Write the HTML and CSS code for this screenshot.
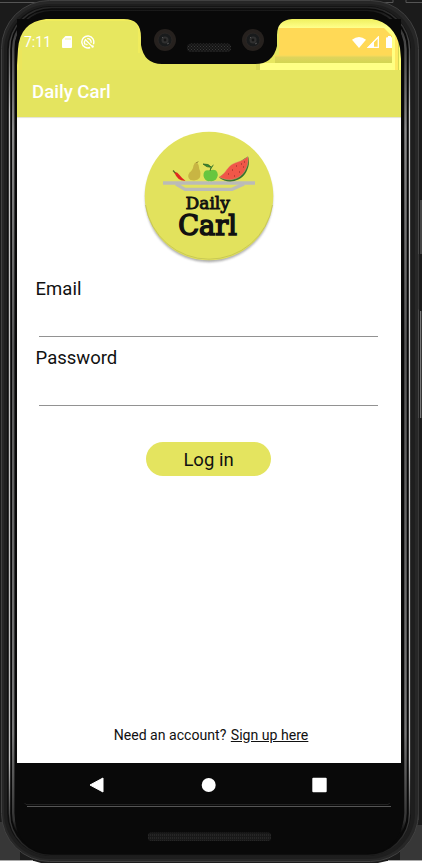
FILE: index.html
```html
<!DOCTYPE html>
<html lang="en">
<head>
<meta charset="utf-8">
<title>Daily Carl</title>
<link rel="stylesheet" href="styles.css">
</head>
<body>
<div class="device">
  <svg class="shell" viewBox="0 0 422 863" aria-hidden="true">
    <defs>
      <linearGradient id="rail" x1="0" y1="0" x2="0" y2="863" gradientUnits="userSpaceOnUse">
        <stop offset="0" stop-color="#202020"/><stop offset=".04" stop-color="#3c3c3c"/>
        <stop offset=".13" stop-color="#c4c4c4"/><stop offset=".88" stop-color="#c0c0c0"/>
        <stop offset=".95" stop-color="#3a3a3a"/><stop offset=".99" stop-color="#1c1c1c"/>
      </linearGradient>
      <linearGradient id="rail2" x1="0" y1="0" x2="0" y2="863" gradientUnits="userSpaceOnUse">
        <stop offset="0" stop-color="#0a0a0a"/><stop offset=".045" stop-color="#444"/>
        <stop offset=".15" stop-color="#8a8a8a"/><stop offset=".4" stop-color="#555"/><stop offset=".85" stop-color="#777"/>
        <stop offset=".95" stop-color="#333"/><stop offset=".965" stop-color="#0a0a0a"/>
      </linearGradient>
      <pattern id="mesh" width="3" height="3" patternUnits="userSpaceOnUse">
        <rect width="3" height="3" fill="#141414"/><path d="M0 0h1v1H0zM1.5 1.5h1v1h-1z" fill="#393939"/>
      </pattern>
      <pattern id="meshLow" width="2" height="3" patternUnits="userSpaceOnUse">
        <rect width="2" height="3" fill="#191919"/><path d="M0 0h1v2H0z" fill="#262626"/>
      </pattern>
    </defs>
    <rect width="422" height="863" fill="#1b1b1b"/>
    <path d="M0 2.5H44M380 2.5H393V0M406 0V2.5H422" stroke="#555" fill="none"/>
    <path d="M0 822H20V861H0zM400 825H422V861H400z" fill="#373737"/>
    <path d="M0 860.5H33M388 860.5H422" stroke="#aaa"/>
    <path d="M0 861H34L41 863H0zM422 861H387L378 863H422z" fill="#fff"/>
    <rect x="1.5" y=".5" width="417" height="861" rx="48" fill="#272727" stroke="#414141"/>
    <rect x="4" y="4" width="411" height="855" rx="46" fill="#1e1e1e"/>
    <rect x="7" y="6" width="404" height="850" rx="44" fill="#101010"/>
    <rect x="9.5" y="7.5" width="400" height="848" rx="42" fill="#090909" stroke="url(#rail)" stroke-width="1.4"/>
    <rect x="13.2" y="11" width="392.3" height="840" rx="38" fill="#090909" stroke="url(#rail2)" stroke-width="2.4"/>
    <rect x="15" y="11" width="388" height="843" rx="36" fill="#090909"/>
    <path d="M418.5 200V254M418.5 310V418" stroke="#484848"/>
    <path d="M420 200h2v54h-2z" fill="#444"/><path d="M420 311h1.3v107h-1.3z" fill="#777"/>
    <path d="M418.5 254V309M418.5 418V820" stroke="#383838"/>
    <path d="M18 796L26 804.5H388L397 797" fill="none" stroke="#222"/>
    <path d="M27 806.5H391" stroke="#555"/>
    <rect x="148" y="832.5" width="123" height="8.5" rx="3" fill="url(#meshLow)"/>
  </svg>

  <main class="screen">
    <header class="status">
      <svg class="glow" viewBox="0 0 384 51" aria-hidden="true">
        <defs>
          <linearGradient id="shade" x1="0" y1="0" x2="0" y2="1">
            <stop offset="0" stop-color="#ffdc5a"/><stop offset=".3" stop-color="#dfd45b"/><stop offset="1" stop-color="#d3d552"/>
          </linearGradient>
          <linearGradient id="topGlow" x1="0" y1="0" x2="0" y2="1">
            <stop offset="0" stop-color="#f0f05e"/><stop offset="1" stop-color="#ffff8c"/>
          </linearGradient>
        </defs>
        <rect width="384" height="51" fill="#e7e75f"/>
        <path d="M1 51V28Q3 1 29 1H112Q122 2 122 12V34" fill="none" stroke="#f4ee5c" stroke-width="1.4"/>
        <path d="M4 51V30" stroke="#efe55b"/>
        <path d="M239 44h4v7h-4z" fill="#dcdc5a"/>
        <rect x="243" y="44" width="141" height="7" fill="#ffff86"/>
        <rect x="258" y="0" width="126" height="9" fill="url(#topGlow)"/>
        <path d="M366 9H384V44H366z" fill="#ffff82"/>
        <path d="M262 9H367L375 17V37H262z" fill="#ffd956"/>
        <rect x="258" y="36" width="117" height="8" fill="url(#shade)"/>
        <path d="M375 19H378V51H375z" fill="#ffff82"/>
        <path d="M378 17H381V51H378z" fill="#ffe963"/>
        <path d="M381 20H382V51H381z" fill="#d5d553"/>
        <path d="M382 12H384V51H382z" fill="#ffff72"/>
      </svg>
      <div class="status-left">
        <span class="clock">7:11</span>
        <svg class="sd" viewBox="0 0 10 12"><path d="M3.5 0H9q1 0 1 1v10q0 1-1 1H1q-1 0-1-1V3.5z" fill="#fff"/><path d="M4 2v2M6 2v2M8 2v2" stroke="#e7e75f" stroke-width=".6"/></svg>
        <svg class="sync" viewBox="0 0 14 14" fill="none" stroke="#fff"><path d="M12.4 9.2A6 6 0 1 0 9.2 12.5" stroke-width="1.4"/><path d="M4.5 9.7A3.4 3.4 0 0 1 4 5.3M6.2 3.7A3.4 3.4 0 0 1 10.1 7.8M4 4.3L10.8 11.1M6.4 9.9L5.3 9.1" stroke-width="1.3"/><circle cx="11.6" cy="11.5" r="1.2" fill="#fff" stroke="none"/></svg>
      </div>
      <div class="status-right">
        <svg class="wifi" viewBox="0 0 14 11"><path d="M0 2.7Q7-2.7 14 2.7L7 11z" fill="#fff"/></svg>
        <svg class="signal" viewBox="0 0 12 12"><path d="M11.3 1V11.3H1.4z" fill="none" stroke="#fff" stroke-width="1.3"/><path d="M0 12L7 5V12z" fill="#fff"/></svg>
        <svg class="battery" viewBox="0 0 6 12"><path d="M0 2.2Q0 1.2 1 1.2H2V0H5V1.2H6V12H0z" fill="#fff"/></svg>
      </div>
    </header>

    <div class="appbar">Daily Carl</div>

    <section class="content">
      <svg class="logo" viewBox="0 0 138 140" role="img" aria-label="Daily Carl">
        <defs><filter id="soft" x="-10%" y="-10%" width="120%" height="120%"><feGaussianBlur stdDeviation="1.3"/></filter></defs>
        <circle cx="69" cy="71.5" r="63.7" fill="#777" opacity=".6" filter="url(#soft)"/>
        <circle cx="69" cy="69" r="64.3" fill="#e2e25d"/>
        <path d="M5.5 78A64.3 64.3 0 0 0 132.5 78" fill="none" stroke="#bdbd50" stroke-width=".7"/>
        <path d="M23 56H115" fill="none" stroke="#bbbbb8" stroke-width="3.4"/>
        <path d="M36 57L45 62.3H92L104 57" fill="none" stroke="#bbbbb8" stroke-width="3.2"/>
        <path d="M34.5 45Q37 44.500 39.500 48Q42 51.500 45.500 53.700Q38 54.500 34.500 46z" fill="#df281f"/><path d="M33 43.500L35.300 46" stroke="#536b28" stroke-width="1.200"/>
        <path d="M57 35.500Q59.500 38 59.300 42Q61.500 46 59.600 51Q57 54.500 50.500 53Q46.500 50 49.500 45.500Q53 43 53.500 38.500Q55 34.500 57 35.500z" fill="#c8b543"/><path d="M56.500 36L58 34.500" stroke="#766424"/>
        <path d="M70 43.500Q73 42 76 43.500Q79.500 47 76 52.500Q73 54.800 70 54Q65 55 63.500 49Q63 42 70 43.500z" fill="#67c63f"/>
        <path d="M70 44Q70 40 73.500 38M71 40Q67 41 63 37Q69 36.500 71 40" fill="#338f2d" stroke="#37662a" stroke-width=".8"/>
        <path d="M79 50.500C87 57 99 55 105 47C109 41 110 34 108 29.500C100 34 90 42 79 50.500z" fill="#35702e"/>
        <path d="M79 50C88 55 98 53 103.500 46C107.500 40.500 109 34 107.800 29.500C102 35 97 34 91 38C86 42 85 47 79 50z" fill="#f05748" stroke="#cfbf7c" stroke-width=".4"/>
        <path d="M88 47h1M92 43h1M96 39h1M101 37h1M94 49h1M99 45h1M103 40h1M104 35h1" stroke="#8a2925"/>
        <text class="logo-small" x="45.500" y="82.300" textLength="44.500" lengthAdjust="spacingAndGlyphs">Daily</text>
        <text class="logo-big" x="38.200" y="108.300" textLength="58.800" lengthAdjust="spacingAndGlyphs">Carl</text>
      </svg>
      <form class="form">
        <label for="email">Email</label>
        <input id="email" type="email">
        <label for="password">Password</label>
        <input id="password" type="password">
        <button type="button">Log in</button>
      </form>
      <p class="signup">Need an account? <a href="#">Sign up here</a></p>
    </section>

    <nav class="nav">
      <svg viewBox="0 0 16 16"><path d="M14 1V15L1 8z" fill="#fff" stroke="#fff" stroke-linejoin="round"/></svg>
      <svg viewBox="0 0 16 16"><circle cx="7.7" cy="8" r="7" fill="#fff"/></svg>
      <svg viewBox="0 0 16 16"><rect x=".3" y=".8" width="14.400" height="14.400" rx="1" fill="#fff"/></svg>
    </nav>
  </main>

  <svg class="notch" viewBox="0 0 384 50" aria-hidden="true">
    <path d="M0 0H29Q3 3 1 30L0 46z" fill="#090909"/>
    <path d="M384 0H355Q378 4 383 29L384 40z" fill="#090909"/>
    <path d="M107 0Q124 0 124 18V26Q127 45 145 45H238Q256 45 260 27V16Q260 1 275 0z" fill="#090909"/>
    <g transform="translate(148 21)"><circle r="11" fill="#26211e"/><circle r="7" fill="#191b1c" stroke="#2b2725"/><circle r="3.5" fill="#303030"/><circle r="1.4" fill="#151515"/><path d="M-3-3l1 1M2 4l2-1" stroke="#606060" stroke-width=".8"/></g>
    <g transform="translate(236 21)"><circle r="11" fill="#26211e"/><circle r="7" fill="#191b1c" stroke="#2b2725"/><circle r="3.5" fill="#303030"/><circle r="1.4" fill="#151515"/><path d="M-3-3l1 1M2 4l2-1" stroke="#606060" stroke-width=".8"/></g>
    <rect x="170" y="24.5" width="44" height="8.5" rx="4" fill="url(#mesh)"/>
  </svg>
</div>
</body>
</html>
```
FILE: styles.css
```css
* { box-sizing: border-box; }
body { margin: 0; font-family: Roboto, "Liberation Sans", sans-serif; color: #111; }
svg { display: block; flex: none; }
.device { position: relative; width: 422px; height: 863px; padding: 19px 21px 60px 17px; overflow: hidden; }
.shell { position: absolute; inset: 0; width: 422px; height: 863px; }
.screen { position: relative; display: flex; flex-direction: column; width: 384px; height: 784px; }
.notch { position: absolute; left: 17px; top: 19px; width: 384px; height: 50px; }

.status { position: relative; height: 51px; display: flex; justify-content: space-between; align-items: flex-start; padding: 14px 9px 0 7px; color: #fff; }
.glow { position: absolute; inset: 0; width: 384px; height: 51px; }
.status-left, .status-right { position: relative; display: flex; align-items: center; height: 18px; }
.clock { font-size: 14px; line-height: 18px; width: 38px; }
.sd { width: 10px; height: 12px; }
.sync { width: 14px; height: 14px; margin-left: 9px; }
.wifi { width: 14px; height: 11px; }
.signal { width: 12px; height: 12px; margin-left: 1px; }
.battery { width: 6px; height: 12px; margin-left: 7px; }

.appbar { height: 47px; padding-left: 15px; background: #e4e45f; color: #fff; font-size: 18.6px; font-weight: 500; line-height: 44px; }

.content { flex: 1; display: flex; flex-direction: column; background: #fff; box-shadow: inset 0 1px 1px #e3e3d4; padding: 10px 19px 0 18px; }
.logo { width: 138px; height: 140px; align-self: center; }
.logo-small, .logo-big { font-family: "DejaVu Serif", serif; font-weight: 400; fill: #111; stroke: #111; }
.logo-small { font-size: 17.5px; stroke-width: .9px; }
.logo-big { font-size: 28.5px; stroke-width: 1.6px; }

.form { display: flex; flex-direction: column; margin-top: 9px; }
label { height: 26px; line-height: 26px; font-size: 18.5px; padding-left: .6px; }
input { height: 35px; margin: 0 4px 8px; padding: 0; border: 0; border-bottom: 1px solid #929292; background: none; }
button { align-self: center; width: 125px; height: 34px; margin: 28px 1px 0 0; padding: 2px 0 0 1px; border: 0; border-radius: 17px; background: #e4e45f; color: #111; font: 18.5px/32px Roboto, sans-serif; }
.signup { margin: auto 0 18px; padding-left: 5px; text-align: center; font-size: 14.1px; line-height: 20px; }
.signup a { color: inherit; text-decoration: underline; text-underline-offset: 1px; margin-left: 1px; }

.nav { height: 40px; display: flex; justify-content: space-between; align-items: center; padding: 4px 73px 0 72px; background: #090909; }
.nav svg { width: 16px; height: 16px; }
```
